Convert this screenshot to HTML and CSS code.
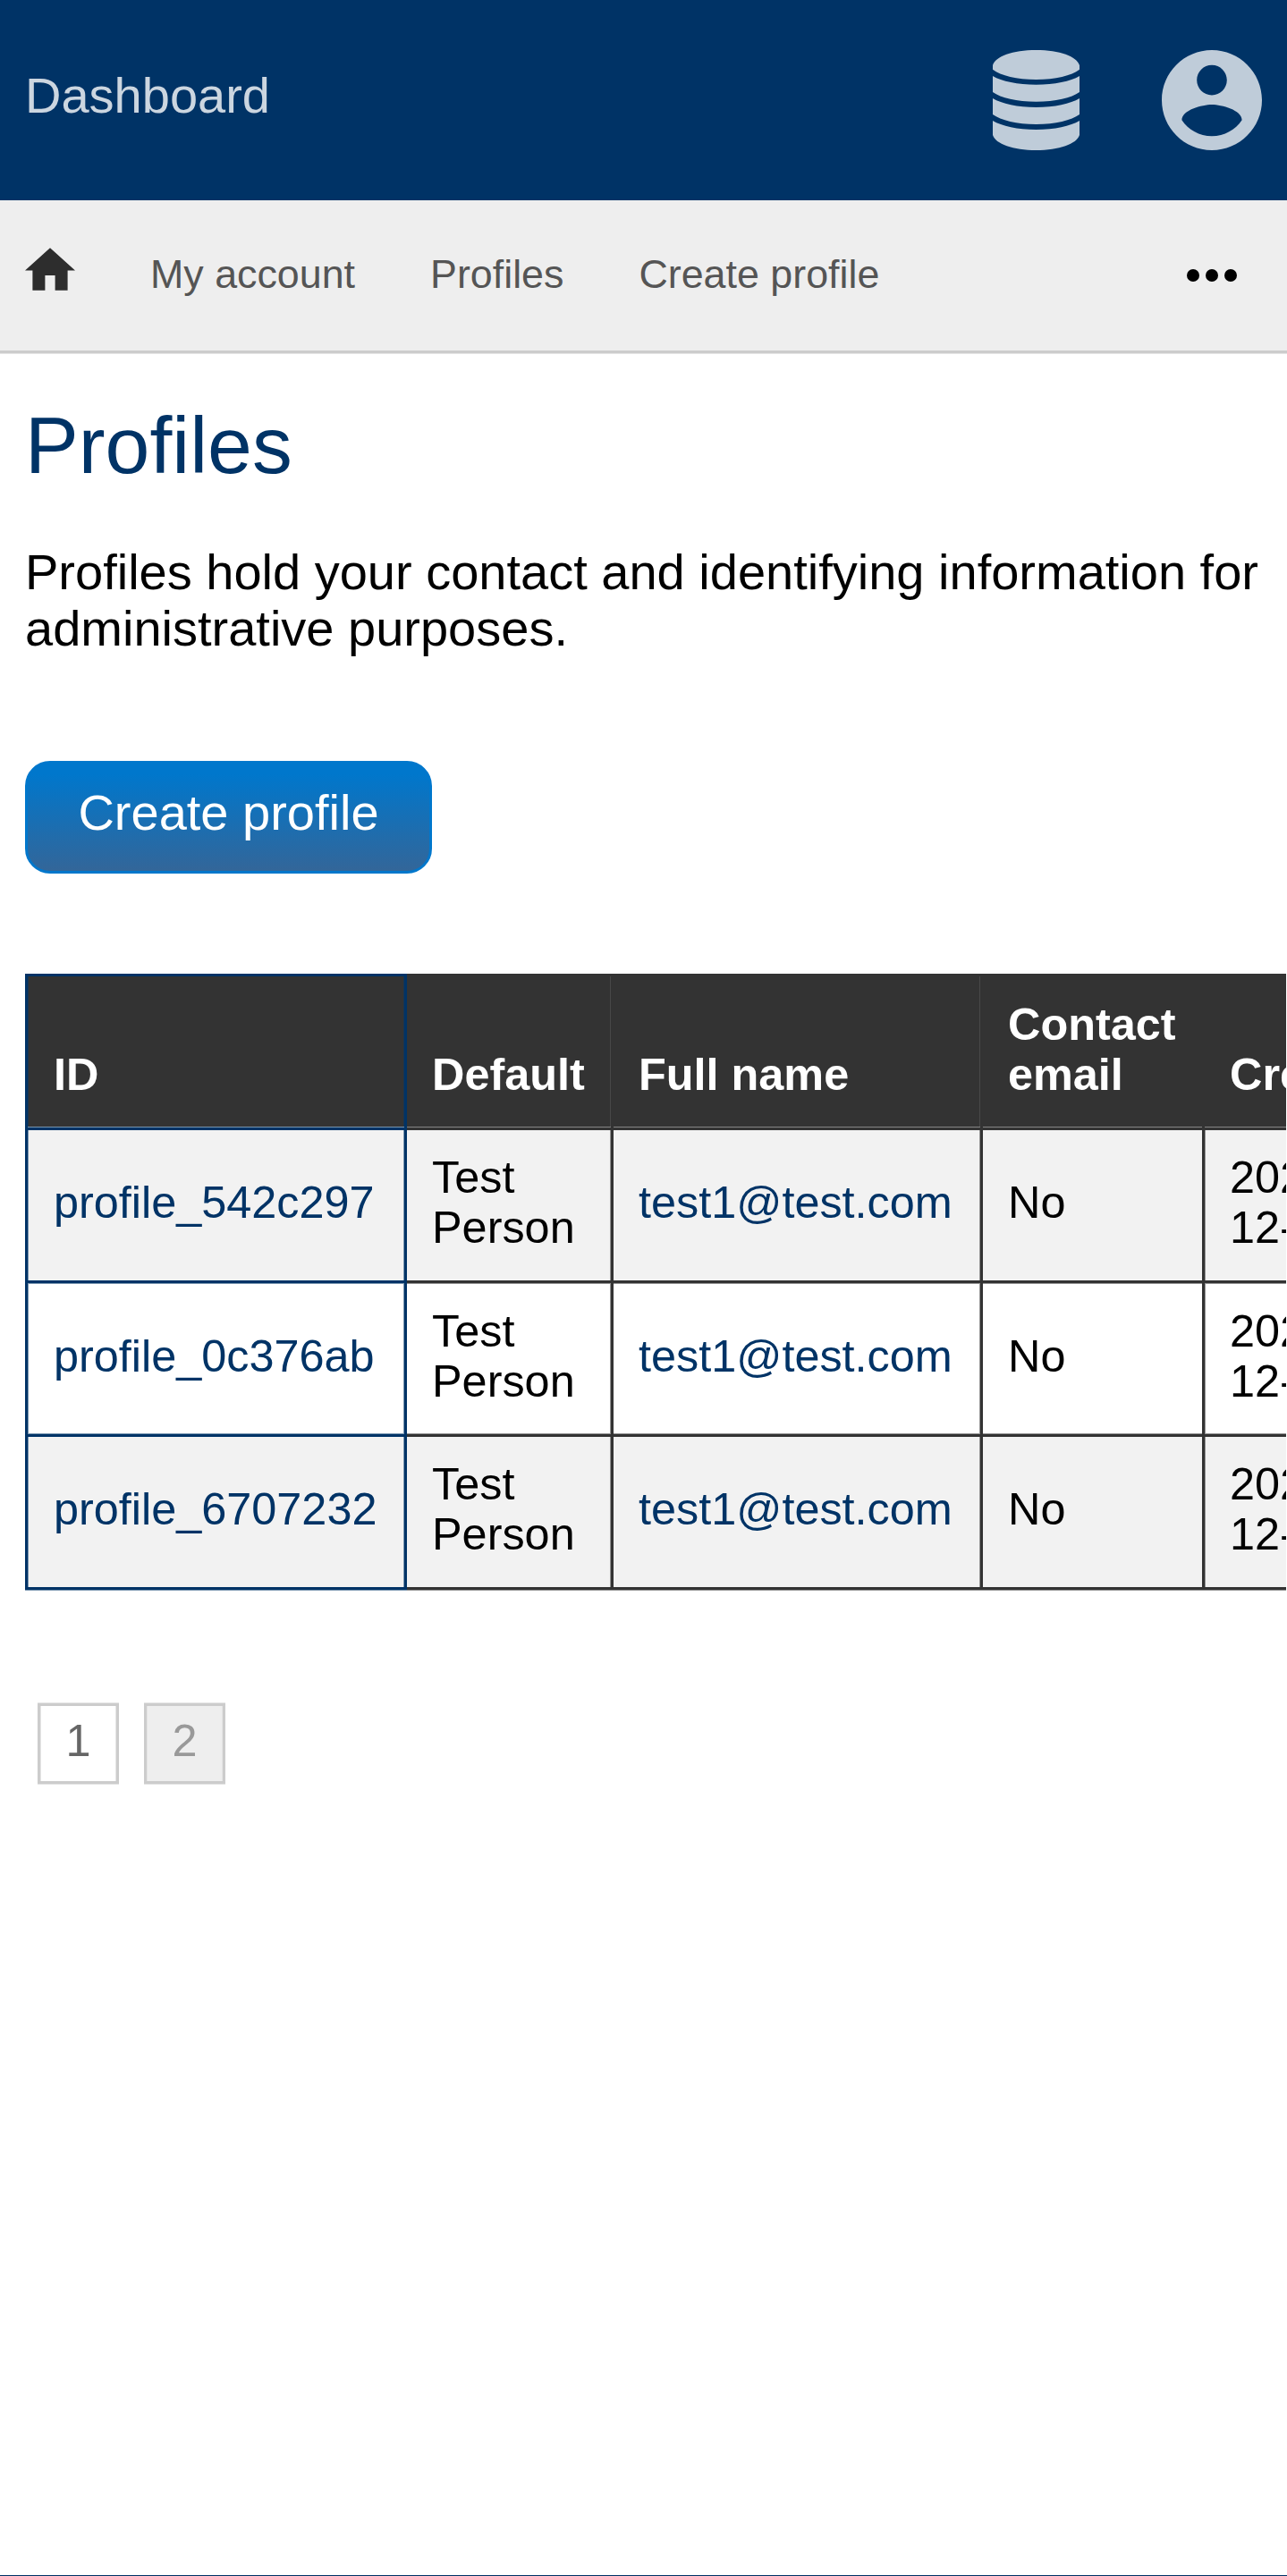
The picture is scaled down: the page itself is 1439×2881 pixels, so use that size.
FILE: index.html
```
<!DOCTYPE html>
<html lang="en">
<head>
<meta charset="utf-8">
<title>Profiles</title>
<link rel="stylesheet" href="styles.css">
</head>
<body>
<header class="topbar">
  <a class="brand">Dashboard</a>
  <div class="topbar-icons">
    <svg class="icon-db" viewBox="0 0 97 112"><path d="M0 17C3 7 22 0 48.500 0S94 7 97 17V21.700C88 28.500 70 33 48.500 33S9 28.500 0 21.700ZM0 29C10 35 28 38.700 48.500 38.700S87 35 97 29V47C88 53.500 70 57.700 48.500 57.700S9 53.500 0 47ZM0 54C10 60 28 64 48.500 64S87 60 97 54V72C88 78.500 70 83 48.500 83S9 78.500 0 72ZM0 79C10 85 28 89 48.500 89S87 85 97 79V95C94 105 74 112 48.500 112S3 105 0 95Z"/></svg>
    <svg class="icon-user" viewBox="2 2 20 20"><path d="M12 2C6.480 2 2 6.480 2 12s4.480 10 10 10 10-4.480 10-10S17.520 2 12 2zm0 3c1.660 0 3 1.340 3 3s-1.340 3-3 3-3-1.340-3-3 1.340-3 3-3zm0 14.200c-2.500 0-4.710-1.280-6-3.220.03-1.990 4-3.080 6-3.080 1.990 0 5.970 1.090 6 3.080-1.290 1.940-3.500 3.220-6 3.220z"/></svg>
  </div>
</header>
<nav class="nav">
  <svg class="icon-home" viewBox="2 3 20 17"><path d="M10 20v-6h4v6h5v-8h3L12 3 2 12h3v8z"/></svg>
  <a class="nav-link">My account</a>
  <a class="nav-link">Profiles</a>
  <a class="nav-link">Create profile</a>
  <svg class="icon-more" viewBox="0 0 24 24"><circle cx="6" cy="12" r="2"/><circle cx="12" cy="12" r="2"/><circle cx="18" cy="12" r="2"/></svg>
</nav>
<main class="content">
  <h1 class="title">Profiles</h1>
  <p class="intro">Profiles hold your contact and identifying information for administrative purposes.</p>
  <a class="button">Create profile</a>
  <div class="table-wrap">
    <table class="table">
      <colgroup><col class="c-id"><col class="c-default"><col class="c-name"><col class="c-email"><col class="c-created"></colgroup>
      <thead>
        <tr><th>ID</th><th>Default</th><th>Full name</th><th>Contact email</th><th>Created</th></tr>
      </thead>
      <tbody>
        <tr><td><a>profile_542c297</a></td><td>Test Person</td><td><a>test1@test.com</a></td><td>No</td><td>2020-<br>12-10</td></tr>
        <tr><td><a>profile_0c376ab</a></td><td>Test Person</td><td><a>test1@test.com</a></td><td>No</td><td>2020-<br>12-10</td></tr>
        <tr><td><a>profile_6707232</a></td><td>Test Person</td><td><a>test1@test.com</a></td><td>No</td><td>2020-<br>12-10</td></tr>
      </tbody>
    </table>
  </div>
  <div class="pager">
    <a class="page">1</a>
    <a class="page page-off">2</a>
  </div>
</main>
<footer class="footer"></footer>
</body>
</html>
```
FILE: styles.css
```
* { box-sizing: border-box; }
body {
  margin: 0;
  height: 2881px;
  overflow: hidden;
  display: flex;
  flex-direction: column;
  background: #fff;
  color: #000;
  font: 56px/63px "Liberation Sans", Arial, sans-serif;
}
svg { display: block; flex: none; }
.topbar {
  height: 224px;
  flex: none;
  display: flex;
  justify-content: space-between;
  padding: 56px 28px 0;
  background: #036;
}
.brand { color: #ccd6e0; line-height: 63px; padding-top: 19px; }
.topbar-icons { display: flex; gap: 92px; fill: #bfccd9; }
.icon-db { width: 97px; height: 112px; }
.icon-user { width: 112px; height: 112px; }
.nav {
  height: 171px;
  flex: none;
  display: flex;
  align-items: flex-start;
  padding: 0 42px 0 28px;
  background: #eee;
  border-bottom: 3px solid #ccc;
  box-shadow: 0 1px #e5e5e5;
  font-size: 44.8px;
  line-height: 52px;
}
.icon-home { width: 56px; height: 48px; margin: 53px 0 0; fill: #2d2d2d; }
.nav-link { margin: 56px 0 0 84px; color: #555; white-space: nowrap; }
.icon-more { width: 84px; height: 84px; margin: 42px 0 0 auto; }
.content { flex: 1; padding: 0 0 0 28px; }
.title {
  margin: 52px 0 0;
  color: #036;
  font-size: 89.6px;
  line-height: 102px;
  font-weight: 400;
}
.intro { margin: 59px 0 0; width: 1383px; }
.button {
  display: block;
  width: 455px;
  height: 126px;
  margin-top: 117px;
  padding: 23px 0 0;
  border: 3px solid #07c;
  border-radius: 28px;
  background: linear-gradient(#07c 10%, #369);
  color: #fff;
  text-align: center;
}
.table-wrap { margin: 112px 1px 0 0; padding-bottom: 1px; overflow: hidden; }
.table {
  width: 1561px;
  table-layout: fixed;
  border-collapse: separate;
  border-spacing: 0;
  font-size: 50.4px;
  line-height: 56px;
}
.c-id { width: 427px; }
.c-default { width: 231px; }
.c-name { width: 413px; }
.c-email { width: 248px; }
.c-created { width: 242px; }
.table th, .table td {
  --line: #333;
  --soft: #929292;
  --top: 0px;
  --bottom: 0px;
  --left: 0px;
  --right: -1px;
  --under: 0px;
  padding: 0 0 0 28px;
  border: 0 solid var(--line);
  border-width: 0 3px 3px 0;
  text-align: left;
  box-shadow:
    0 var(--under) var(--soft),
    inset 0 var(--top) var(--soft),
    inset 0 var(--bottom) var(--soft),
    inset var(--left) 0 var(--side, var(--soft)),
    inset var(--right) 0 var(--side, var(--soft));
}
.table th {
  --soft: #858585;
  --side: #484848;
  --bottom: -1px;
  height: 175px;
  padding-bottom: 31px;
  border-top-width: 3px;
  vertical-align: bottom;
  background: #333;
  color: #fff;
}
.table td { height: 171px; padding-bottom: 7px; }
.table tr > :first-child {
  --line: #036;
  --soft: #7995af;
  --left: 1px;
  padding-left: 29px;
  border-left-width: 3px;
}
.table th:first-child { --side: #1a3550; }
.table tr > :nth-child(n+4) { --right: 0px; }
.table td:nth-child(5) { --left: 1px; }
.table tbody tr:nth-child(odd) td { background: #f2f2f2; }
.table tbody tr:nth-child(2) td { --top: 1px; --bottom: -1px; height: 172px; padding-bottom: 6px; }
.table tbody tr:last-child td { --under: 1px; }
.table a { color: #036; }
.pager { display: flex; gap: 28px; margin: 126px 0 0 14px; }
.page {
  width: 91px;
  height: 90px;
  padding-top: 11px;
  border: 3px solid #ccc;
  box-shadow:
    0 -1px #e5e5e5,
    0 1px #e5e5e5,
    inset 1px 0 #e5e5e5,
    inset -1px 0 #e5e5e5;
  color: #666;
  font-size: 50.4px;
  line-height: 56px;
  text-align: center;
}
.page-off { background: #eee; color: #999; }
.footer { flex: none; height: 1px; background: #036; }
```
